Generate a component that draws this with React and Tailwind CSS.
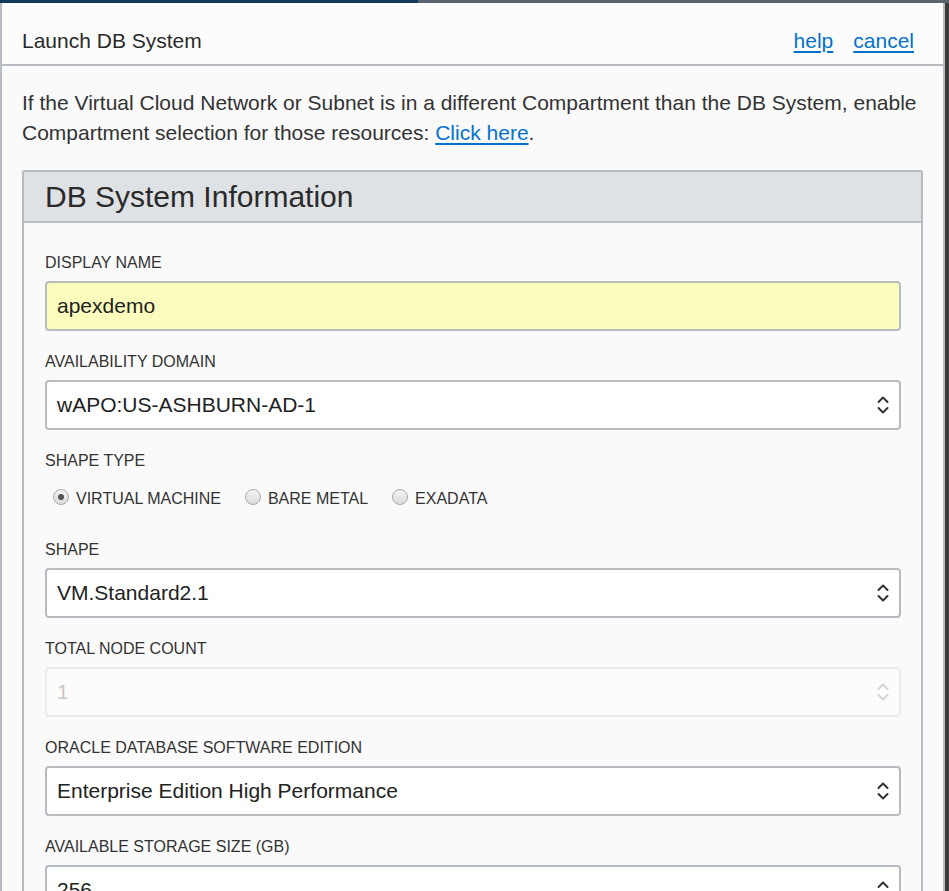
import React from 'react';

const font = { fontFamily: '"Liberation Sans", Arial, sans-serif' };

function Chevrons({ disabled }) {
  const c = disabled ? '#d4d4d4' : '#333';
  return (
    <svg width="14" height="22" viewBox="0 0 14 22" className="shrink-0">
      <path d="M2.5 8 L7 3.5 L11.5 8" fill="none" stroke={c} strokeWidth="2" strokeLinecap="round" strokeLinejoin="round" />
      <path d="M2.5 14 L7 18.5 L11.5 14" fill="none" stroke={c} strokeWidth="2" strokeLinecap="round" strokeLinejoin="round" />
    </svg>
  );
}

function Field({ label, children }) {
  return (
    <div className="flex flex-col">
      <div className="text-[16px] leading-[18px] text-[#333] uppercase mb-[9px]">{label}</div>
      {children}
    </div>
  );
}

function Select({ value, disabled, yellow }) {
  return (
    <div
      className={`h-[50px] rounded-[4px] border-2 flex items-center justify-between pl-[10px] pr-[9px] ${
        disabled ? 'border-[#ebebeb] bg-[#fcfcfc] text-[#c8c8c8]' : yellow ? 'border-[#b7bcc3] bg-[#fbfdbd] text-[#222]' : 'border-[#b7bcc3] bg-white text-[#222]'
      }`}
    >
      <span className="text-[21px]">{value}</span>
      {yellow ? null : <Chevrons disabled={disabled} />}
    </div>
  );
}

function Radio({ checked, label }) {
  return (
    <label className="flex items-center gap-[7px]">
      <span className="w-[16px] h-[16px] rounded-full border border-[#a9a9a9] bg-gradient-to-b from-[#f4f4f4] to-[#dcdcdc] flex items-center justify-center mt-[-5px]">
        {checked && <span className="w-[6px] h-[6px] rounded-full bg-[#555]" />}
      </span>
      <span className="text-[16px] text-[#333]">{label}</span>
    </label>
  );
}

export default function App() {
  return (
    <div className="w-[949px] h-[891px] overflow-hidden bg-[#3b3b3b] relative" style={font}>
      <div className="h-[3px] flex">
        <div className="w-[418px] bg-[#163a59]" />
        <div className="flex-1 bg-[#5a6470]" />
      </div>
      <div className="w-[945px] h-[888px] bg-[#fafafa] border-l-2 border-r-2 border-[#b7bcc3] flex flex-col">
        {/* header */}
        <div className="h-[63px] shrink-0 bg-[#fcfcfc] border-b-2 border-[#b7bcc3] flex items-center justify-between pt-[14px] pl-[20px] pr-[29px]">
          <span className="text-[21px] text-[#2a2a2a]">Launch DB System</span>
          <div className="flex gap-[20px] text-[21px] text-[#0572ce]">
            <a className="underline underline-offset-[3px]">help</a>
            <a className="underline underline-offset-[3px]">cancel</a>
          </div>
        </div>

        <div className="pl-[20px] pr-[18px] pt-[22px]">
          <p className="text-[21px] leading-[30px] text-[#333]">
            If the Virtual Cloud Network or Subnet is in a different Compartment than the DB System, enable Compartment selection for those resources:{' '}
            <a className="text-[#0572ce] underline underline-offset-[3px]">Click here</a>.
          </p>

          <div className="mt-[22px] w-[901px] border-2 border-[#b7bcc3] rounded-t-[2px] bg-[#fafafa]">
            <div className="h-[51px] bg-[#dfe2e5] border-b-2 border-[#b7bcc3] flex items-center pl-[21px]">
              <h2 className="text-[30px] text-[#2a2a2a]">DB System Information</h2>
            </div>

            <div className="pl-[21px] pr-[20px] pt-[31px] flex flex-col gap-[22px]">
              <Field label="Display Name">
                <Select value="apexdemo" yellow />
              </Field>
              <Field label="Availability Domain">
                <Select value="wAPO:US-ASHBURN-AD-1" />
              </Field>
              <div className="flex flex-col">
                <div className="text-[16px] leading-[18px] text-[#333] uppercase mb-[8px]">Shape Type</div>
                <div className="flex gap-[24px] pl-[8px] h-[41px] items-start pt-[9px]">
                  <Radio checked label="VIRTUAL MACHINE" />
                  <Radio label="BARE METAL" />
                  <Radio label="EXADATA" />
                </div>
              </div>
              <Field label="Shape">
                <Select value="VM.Standard2.1" />
              </Field>
              <Field label="Total Node Count">
                <Select value="1" disabled />
              </Field>
              <Field label="Oracle Database Software Edition">
                <Select value="Enterprise Edition High Performance" />
              </Field>
              <Field label="Available Storage Size (GB)">
                <Select value="256" />
              </Field>
            </div>
          </div>
        </div>
      </div>
    </div>
  );
}
